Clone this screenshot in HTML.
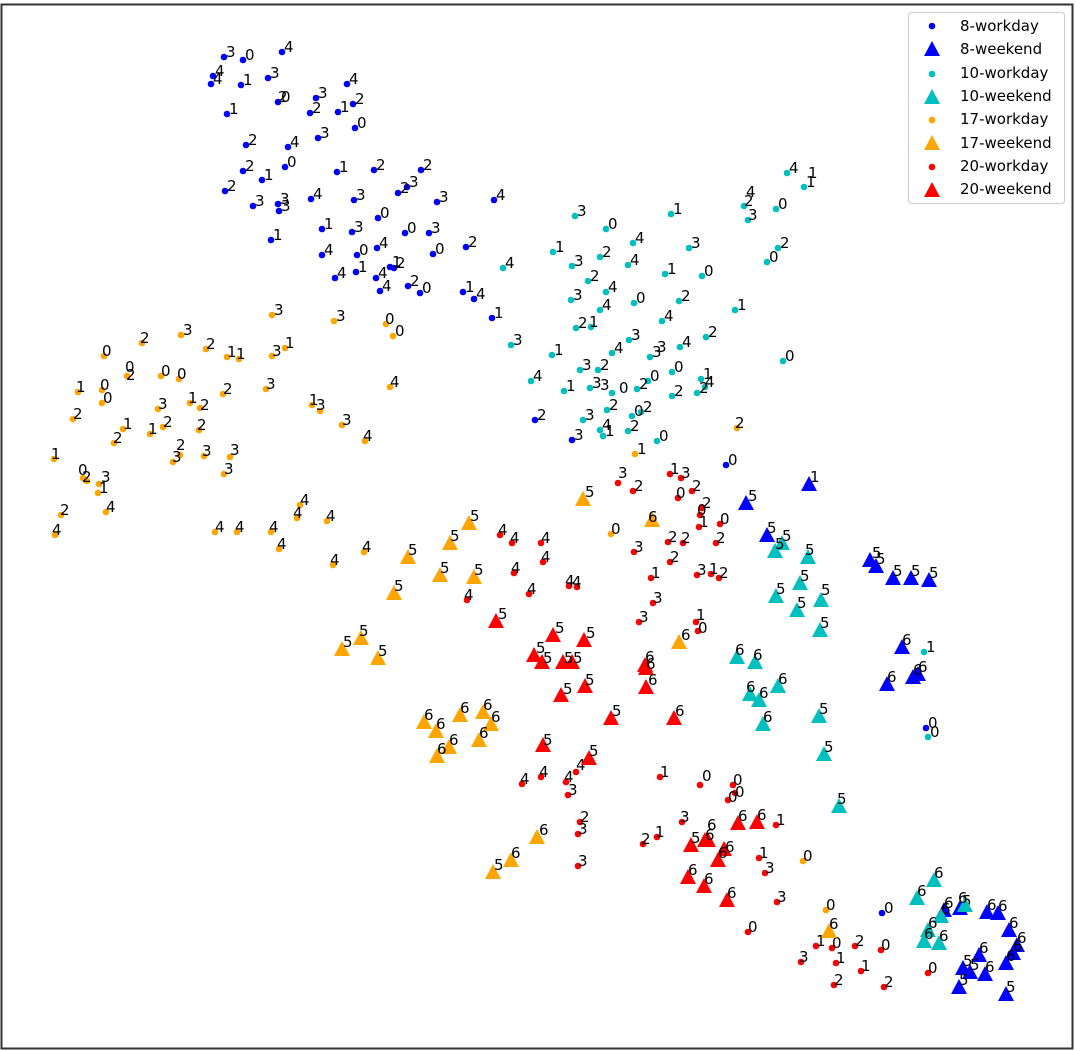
<!DOCTYPE html>
<html><head><meta charset="utf-8"><style>
html,body{margin:0;padding:0;background:#fff;width:1076px;height:1050px;overflow:hidden}
svg{display:block}
text{font-family:"DejaVu Sans","Liberation Sans",sans-serif;font-size:15px;fill:#000}
</style></head><body>
<svg width="1076" height="1050" viewBox="0 0 1076 1050" xmlns="http://www.w3.org/2000/svg">
<defs>
<circle id="d" cx="0" cy="0" r="3.3"/>
<path id="t" d="M0,-8 L8,7 L-8,7 Z"/>
</defs>
<rect x="1.5" y="4.5" width="1071" height="1044" fill="#fff" stroke="#333" stroke-width="2"/>

<!-- 8-workday -->
<g fill="#0000ff">
<use href="#d" x="224" y="57"/><use href="#d" x="243" y="60"/><use href="#d" x="282" y="52"/><use href="#d" x="213" y="76"/><use href="#d" x="211" y="84"/><use href="#d" x="241" y="85"/><use href="#d" x="268" y="78"/><use href="#d" x="278" y="102"/><use href="#d" x="316" y="98"/><use href="#d" x="347" y="84"/><use href="#d" x="227" y="114"/><use href="#d" x="310" y="113"/><use href="#d" x="338" y="112"/><use href="#d" x="353" y="104"/><use href="#d" x="355" y="128"/><use href="#d" x="246" y="145"/><use href="#d" x="288" y="147"/><use href="#d" x="318" y="138"/><use href="#d" x="243" y="171"/><use href="#d" x="262" y="180"/><use href="#d" x="285" y="167"/><use href="#d" x="337" y="172"/><use href="#d" x="374" y="170"/><use href="#d" x="421" y="170"/><use href="#d" x="225" y="191"/><use href="#d" x="253" y="206"/><use href="#d" x="278" y="204"/><use href="#d" x="279" y="211"/><use href="#d" x="311" y="199"/><use href="#d" x="354" y="200"/><use href="#d" x="398" y="193"/><use href="#d" x="407" y="187"/><use href="#d" x="437" y="202"/><use href="#d" x="494" y="200"/><use href="#d" x="271" y="240"/><use href="#d" x="322" y="229"/><use href="#d" x="352" y="232"/><use href="#d" x="378" y="218"/><use href="#d" x="405" y="233"/><use href="#d" x="429" y="233"/><use href="#d" x="322" y="255"/><use href="#d" x="357" y="255"/><use href="#d" x="377" y="248"/><use href="#d" x="433" y="254"/><use href="#d" x="466" y="247"/><use href="#d" x="335" y="278"/><use href="#d" x="356" y="272"/><use href="#d" x="376" y="278"/><use href="#d" x="390" y="267"/><use href="#d" x="394" y="268"/><use href="#d" x="380" y="291"/><use href="#d" x="408" y="286"/><use href="#d" x="420" y="293"/><use href="#d" x="463" y="292"/><use href="#d" x="474" y="299"/><use href="#d" x="492" y="318"/><use href="#d" x="535" y="420"/><use href="#d" x="572" y="440"/><use href="#d" x="726" y="465"/><use href="#d" x="926" y="728"/><use href="#d" x="882" y="913"/>
</g>
<g>
<text x="226" y="57">3</text><text x="245" y="60">0</text><text x="284" y="52">4</text><text x="215" y="76">4</text><text x="213" y="84">4</text><text x="243" y="85">1</text><text x="270" y="78">3</text><text x="278" y="102">2</text><text x="281" y="102">0</text><text x="318" y="98">3</text><text x="349" y="84">4</text><text x="229" y="114">1</text><text x="312" y="113">2</text><text x="340" y="112">1</text><text x="355" y="104">2</text><text x="357" y="128">0</text><text x="248" y="145">2</text><text x="290" y="147">4</text><text x="320" y="138">3</text><text x="245" y="171">2</text><text x="264" y="180">1</text><text x="287" y="167">0</text><text x="339" y="172">1</text><text x="376" y="170">2</text><text x="423" y="170">2</text><text x="227" y="191">2</text><text x="255" y="206">3</text><text x="280" y="204">3</text><text x="281" y="211">3</text><text x="313" y="199">4</text><text x="356" y="200">3</text><text x="400" y="193">2</text><text x="409" y="187">3</text><text x="439" y="202">3</text><text x="496" y="200">4</text><text x="273" y="240">1</text><text x="324" y="229">1</text><text x="354" y="232">3</text><text x="380" y="218">0</text><text x="407" y="233">0</text><text x="431" y="233">3</text><text x="324" y="255">4</text><text x="359" y="255">0</text><text x="379" y="248">4</text><text x="435" y="254">0</text><text x="468" y="247">2</text><text x="337" y="278">4</text><text x="358" y="272">1</text><text x="378" y="278">4</text><text x="392" y="267">1</text><text x="396" y="268">2</text><text x="382" y="291">4</text><text x="410" y="286">2</text><text x="422" y="293">0</text><text x="465" y="292">1</text><text x="476" y="299">4</text><text x="494" y="318">1</text><text x="537" y="420">2</text><text x="574" y="440">3</text><text x="728" y="465">0</text><text x="928" y="728">0</text><text x="884" y="913">0</text>
</g>

<!-- 10-workday -->
<g fill="#00bfbf">
<use href="#d" x="575" y="216"/><use href="#d" x="606" y="229"/><use href="#d" x="671" y="214"/><use href="#d" x="744" y="206"/><use href="#d" x="748" y="220"/><use href="#d" x="776" y="209"/><use href="#d" x="787" y="173"/><use href="#d" x="804" y="187"/><use href="#d" x="553" y="252"/><use href="#d" x="572" y="266"/><use href="#d" x="600" y="257"/><use href="#d" x="633" y="243"/><use href="#d" x="689" y="248"/><use href="#d" x="767" y="262"/><use href="#d" x="778" y="248"/><use href="#d" x="503" y="268"/><use href="#d" x="588" y="281"/><use href="#d" x="628" y="265"/><use href="#d" x="606" y="292"/><use href="#d" x="571" y="300"/><use href="#d" x="600" y="310"/><use href="#d" x="634" y="303"/><use href="#d" x="665" y="274"/><use href="#d" x="702" y="276"/><use href="#d" x="679" y="301"/><use href="#d" x="735" y="310"/><use href="#d" x="662" y="321"/><use href="#d" x="576" y="328"/><use href="#d" x="591" y="327"/><use href="#d" x="629" y="340"/><use href="#d" x="706" y="337"/><use href="#d" x="680" y="347"/><use href="#d" x="650" y="357"/><use href="#d" x="552" y="355"/><use href="#d" x="511" y="345"/><use href="#d" x="783" y="361"/><use href="#d" x="580" y="370"/><use href="#d" x="598" y="370"/><use href="#d" x="612" y="353"/><use href="#d" x="531" y="381"/><use href="#d" x="564" y="391"/><use href="#d" x="590" y="388"/><use href="#d" x="612" y="393"/><use href="#d" x="637" y="389"/><use href="#d" x="648" y="381"/><use href="#d" x="672" y="372"/><use href="#d" x="701" y="379"/><use href="#d" x="705" y="387"/><use href="#d" x="672" y="396"/><use href="#d" x="697" y="393"/><use href="#d" x="583" y="420"/><use href="#d" x="607" y="410"/><use href="#d" x="632" y="416"/><use href="#d" x="641" y="412"/><use href="#d" x="600" y="430"/><use href="#d" x="603" y="436"/><use href="#d" x="628" y="431"/><use href="#d" x="657" y="441"/><use href="#d" x="924" y="652"/><use href="#d" x="928" y="737"/>
</g>
<g>
<text x="577" y="216">3</text><text x="608" y="229">0</text><text x="673" y="214">1</text><text x="746" y="197">4</text><text x="744" y="206">2</text><text x="748" y="220">3</text><text x="778" y="209">0</text><text x="789" y="173">4</text><text x="806" y="187">1</text><text x="808" y="178">1</text><text x="555" y="252">1</text><text x="574" y="266">3</text><text x="602" y="257">2</text><text x="635" y="243">4</text><text x="691" y="248">3</text><text x="769" y="262">0</text><text x="780" y="248">2</text><text x="505" y="268">4</text><text x="590" y="281">2</text><text x="630" y="265">4</text><text x="608" y="292">4</text><text x="573" y="300">3</text><text x="602" y="310">4</text><text x="636" y="303">0</text><text x="667" y="274">1</text><text x="704" y="276">0</text><text x="681" y="301">2</text><text x="737" y="310">1</text><text x="664" y="321">4</text><text x="578" y="328">2</text><text x="589" y="327">1</text><text x="631" y="340">3</text><text x="708" y="337">2</text><text x="682" y="347">4</text><text x="652" y="357">3</text><text x="657" y="352">3</text><text x="554" y="355">1</text><text x="513" y="345">3</text><text x="785" y="361">0</text><text x="582" y="370">3</text><text x="600" y="370">2</text><text x="614" y="353">4</text><text x="533" y="381">4</text><text x="566" y="391">1</text><text x="592" y="388">3</text><text x="600" y="390">3</text><text x="619" y="393">0</text><text x="639" y="389">2</text><text x="650" y="381">0</text><text x="674" y="372">0</text><text x="703" y="379">1</text><text x="705" y="387">4</text><text x="674" y="396">2</text><text x="699" y="393">2</text><text x="585" y="420">3</text><text x="609" y="410">2</text><text x="634" y="416">0</text><text x="643" y="412">2</text><text x="602" y="430">4</text><text x="605" y="436">1</text><text x="630" y="431">2</text><text x="659" y="441">0</text><text x="926" y="652">1</text><text x="930" y="737">0</text>
</g>

<!-- 17-workday -->
<g fill="#ffa500">
<use href="#d" x="272" y="315"/><use href="#d" x="334" y="321"/><use href="#d" x="386" y="324"/><use href="#d" x="393" y="336"/><use href="#d" x="104" y="356"/><use href="#d" x="142" y="343"/><use href="#d" x="181" y="335"/><use href="#d" x="206" y="349"/><use href="#d" x="227" y="357"/><use href="#d" x="239" y="359"/><use href="#d" x="272" y="356"/><use href="#d" x="285" y="348"/><use href="#d" x="127" y="376"/><use href="#d" x="161" y="376"/><use href="#d" x="179" y="379"/><use href="#d" x="78" y="392"/><use href="#d" x="102" y="390"/><use href="#d" x="102" y="403"/><use href="#d" x="73" y="419"/><use href="#d" x="390" y="387"/><use href="#d" x="223" y="394"/><use href="#d" x="266" y="389"/><use href="#d" x="158" y="409"/><use href="#d" x="190" y="403"/><use href="#d" x="200" y="408"/><use href="#d" x="312" y="405"/><use href="#d" x="320" y="411"/><use href="#d" x="342" y="425"/><use href="#d" x="123" y="429"/><use href="#d" x="163" y="427"/><use href="#d" x="199" y="430"/><use href="#d" x="114" y="443"/><use href="#d" x="150" y="434"/><use href="#d" x="365" y="441"/><use href="#d" x="54" y="459"/><use href="#d" x="180" y="455"/><use href="#d" x="173" y="462"/><use href="#d" x="204" y="456"/><use href="#d" x="230" y="457"/><use href="#d" x="224" y="474"/><use href="#d" x="83" y="478"/><use href="#d" x="87" y="481"/><use href="#d" x="99" y="484"/><use href="#d" x="98" y="493"/><use href="#d" x="61" y="515"/><use href="#d" x="106" y="512"/><use href="#d" x="55" y="535"/><use href="#d" x="300" y="505"/><use href="#d" x="297" y="518"/><use href="#d" x="327" y="521"/><use href="#d" x="215" y="532"/><use href="#d" x="237" y="532"/><use href="#d" x="271" y="532"/><use href="#d" x="279" y="549"/><use href="#d" x="333" y="565"/><use href="#d" x="364" y="552"/><use href="#d" x="737" y="428"/><use href="#d" x="635" y="454"/><use href="#d" x="611" y="534"/><use href="#d" x="803" y="861"/><use href="#d" x="826" y="910"/>
</g>
<g>
<text x="274" y="315">3</text><text x="336" y="321">3</text><text x="385" y="324">0</text><text x="395" y="336">0</text><text x="102" y="356">0</text><text x="140" y="343">2</text><text x="183" y="335">3</text><text x="206" y="349">2</text><text x="227" y="357">1</text><text x="236" y="359">1</text><text x="272" y="356">3</text><text x="285" y="348">1</text><text x="125" y="372">0</text><text x="126" y="380">2</text><text x="161" y="376">0</text><text x="177" y="379">0</text><text x="76" y="392">1</text><text x="100" y="390">0</text><text x="103" y="403">0</text><text x="73" y="419">2</text><text x="390" y="387">4</text><text x="223" y="394">2</text><text x="266" y="389">3</text><text x="158" y="409">3</text><text x="188" y="403">1</text><text x="200" y="410">2</text><text x="309" y="405">1</text><text x="316" y="410">3</text><text x="342" y="425">3</text><text x="123" y="429">1</text><text x="163" y="427">2</text><text x="197" y="430">2</text><text x="113" y="443">2</text><text x="148" y="434">1</text><text x="363" y="441">4</text><text x="51" y="459">1</text><text x="176" y="450">2</text><text x="172" y="462">3</text><text x="202" y="456">3</text><text x="230" y="455">3</text><text x="224" y="474">3</text><text x="78" y="475">0</text><text x="82" y="482">2</text><text x="101" y="482">3</text><text x="99" y="493">1</text><text x="60" y="515">2</text><text x="106" y="512">4</text><text x="52" y="535">4</text><text x="300" y="505">4</text><text x="293" y="518">4</text><text x="326" y="521">4</text><text x="215" y="532">4</text><text x="235" y="532">4</text><text x="269" y="532">4</text><text x="277" y="549">4</text><text x="330" y="565">4</text><text x="362" y="552">4</text><text x="735" y="428">2</text><text x="637" y="454">1</text><text x="611" y="534">0</text><text x="803" y="861">0</text><text x="826" y="910">0</text>
</g>

<!-- 20-workday -->
<g fill="#ff0000">
<use href="#d" x="618" y="483"/><use href="#d" x="633" y="491"/><use href="#d" x="670" y="474"/><use href="#d" x="681" y="478"/><use href="#d" x="692" y="491"/><use href="#d" x="702" y="508"/><use href="#d" x="700" y="515"/><use href="#d" x="678" y="498"/><use href="#d" x="720" y="524"/><use href="#d" x="699" y="527"/><use href="#d" x="668" y="542"/><use href="#d" x="683" y="543"/><use href="#d" x="716" y="543"/><use href="#d" x="500" y="535"/><use href="#d" x="512" y="543"/><use href="#d" x="541" y="543"/><use href="#d" x="634" y="552"/><use href="#d" x="670" y="562"/><use href="#d" x="543" y="562"/><use href="#d" x="514" y="573"/><use href="#d" x="651" y="578"/><use href="#d" x="697" y="575"/><use href="#d" x="711" y="574"/><use href="#d" x="719" y="578"/><use href="#d" x="569" y="586"/><use href="#d" x="577" y="587"/><use href="#d" x="529" y="594"/><use href="#d" x="467" y="600"/><use href="#d" x="653" y="603"/><use href="#d" x="639" y="622"/><use href="#d" x="696" y="622"/><use href="#d" x="698" y="631"/><use href="#d" x="660" y="777"/><use href="#d" x="700" y="785"/><use href="#d" x="733" y="785"/><use href="#d" x="735" y="793"/><use href="#d" x="728" y="800"/><use href="#d" x="541" y="777"/><use href="#d" x="522" y="784"/><use href="#d" x="566" y="782"/><use href="#d" x="576" y="772"/><use href="#d" x="568" y="795"/><use href="#d" x="580" y="822"/><use href="#d" x="578" y="834"/><use href="#d" x="682" y="822"/><use href="#d" x="776" y="825"/><use href="#d" x="657" y="837"/><use href="#d" x="643" y="844"/><use href="#d" x="578" y="866"/><use href="#d" x="759" y="858"/><use href="#d" x="765" y="873"/><use href="#d" x="777" y="902"/><use href="#d" x="748" y="932"/><use href="#d" x="816" y="946"/><use href="#d" x="832" y="948"/><use href="#d" x="855" y="946"/><use href="#d" x="881" y="950"/><use href="#d" x="801" y="962"/><use href="#d" x="836" y="963"/><use href="#d" x="861" y="971"/><use href="#d" x="834" y="985"/><use href="#d" x="884" y="987"/><use href="#d" x="928" y="973"/>
</g>
<g>
<text x="618" y="478">3</text><text x="634" y="491">2</text><text x="670" y="474">1</text><text x="681" y="478">3</text><text x="692" y="491">2</text><text x="702" y="508">2</text><text x="697" y="515">0</text><text x="676" y="498">0</text><text x="720" y="524">0</text><text x="699" y="527">1</text><text x="668" y="542">2</text><text x="681" y="543">2</text><text x="716" y="543">2</text><text x="498" y="535">4</text><text x="510" y="543">4</text><text x="541" y="543">4</text><text x="634" y="552">3</text><text x="670" y="562">2</text><text x="541" y="562">4</text><text x="511" y="573">4</text><text x="651" y="578">1</text><text x="697" y="575">3</text><text x="709" y="574">1</text><text x="719" y="578">2</text><text x="565" y="586">4</text><text x="572" y="587">4</text><text x="527" y="594">4</text><text x="464" y="600">4</text><text x="653" y="603">3</text><text x="639" y="622">3</text><text x="696" y="620">1</text><text x="698" y="633">0</text><text x="660" y="777">1</text><text x="702" y="781">0</text><text x="733" y="785">0</text><text x="735" y="797">0</text><text x="728" y="802">0</text><text x="539" y="777">4</text><text x="520" y="784">4</text><text x="564" y="782">4</text><text x="576" y="770">4</text><text x="568" y="795">3</text><text x="580" y="822">2</text><text x="578" y="834">3</text><text x="680" y="822">3</text><text x="776" y="825">1</text><text x="655" y="837">1</text><text x="641" y="844">2</text><text x="578" y="866">3</text><text x="759" y="858">1</text><text x="765" y="873">3</text><text x="777" y="902">3</text><text x="748" y="932">0</text><text x="816" y="946">1</text><text x="832" y="948">0</text><text x="855" y="946">2</text><text x="881" y="950">0</text><text x="799" y="962">3</text><text x="836" y="963">1</text><text x="861" y="971">1</text><text x="834" y="985">2</text><text x="884" y="987">2</text><text x="928" y="973">0</text>
</g>

<!-- 17-weekend -->
<g fill="#ffa500">
<use href="#t" x="583" y="499"/><use href="#t" x="652" y="520"/><use href="#t" x="469" y="523"/><use href="#t" x="450" y="543"/><use href="#t" x="408" y="557"/><use href="#t" x="440" y="575"/><use href="#t" x="474" y="577"/><use href="#t" x="394" y="593"/><use href="#t" x="342" y="649"/><use href="#t" x="361" y="638"/><use href="#t" x="378" y="658"/><use href="#t" x="679" y="642"/><use href="#t" x="424" y="722"/><use href="#t" x="436" y="731"/><use href="#t" x="460" y="715"/><use href="#t" x="483" y="712"/><use href="#t" x="491" y="724"/><use href="#t" x="449" y="747"/><use href="#t" x="479" y="740"/><use href="#t" x="437" y="756"/><use href="#t" x="537" y="837"/><use href="#t" x="511" y="860"/><use href="#t" x="493" y="872"/><use href="#t" x="829" y="931"/>
</g>
<g>
<text x="585" y="497">5</text><text x="648" y="522">6</text><text x="470" y="521">5</text><text x="450" y="541">5</text><text x="408" y="555">5</text><text x="440" y="573">5</text><text x="474" y="575">5</text><text x="394" y="591">5</text><text x="343" y="647">5</text><text x="359" y="636">5</text><text x="378" y="656">5</text><text x="681" y="640">6</text><text x="424" y="720">6</text><text x="436" y="729">6</text><text x="460" y="713">6</text><text x="483" y="710">6</text><text x="491" y="722">6</text><text x="449" y="745">6</text><text x="479" y="738">6</text><text x="437" y="754">6</text><text x="539" y="835">6</text><text x="511" y="858">6</text><text x="494" y="870">5</text><text x="829" y="929">6</text>
</g>

<!-- 20-weekend -->
<g fill="#ff0000">
<use href="#t" x="496" y="621"/><use href="#t" x="553" y="635"/><use href="#t" x="584" y="640"/><use href="#t" x="534" y="655"/><use href="#t" x="542" y="662"/><use href="#t" x="563" y="662"/><use href="#t" x="572" y="662"/><use href="#t" x="645" y="665"/><use href="#t" x="646" y="668"/><use href="#t" x="646" y="687"/><use href="#t" x="585" y="686"/><use href="#t" x="561" y="695"/><use href="#t" x="611" y="718"/><use href="#t" x="674" y="718"/><use href="#t" x="543" y="745"/><use href="#t" x="589" y="758"/><use href="#t" x="738" y="823"/><use href="#t" x="757" y="822"/><use href="#t" x="708" y="840"/><use href="#t" x="705" y="840"/><use href="#t" x="691" y="845"/><use href="#t" x="724" y="849"/><use href="#t" x="718" y="860"/><use href="#t" x="688" y="877"/><use href="#t" x="704" y="886"/><use href="#t" x="727" y="900"/>
</g>
<g>
<text x="498" y="619">5</text><text x="555" y="633">5</text><text x="586" y="638">5</text><text x="536" y="653">5</text><text x="543" y="663">5</text><text x="564" y="663">5</text><text x="573" y="663">5</text><text x="645" y="662">6</text><text x="646" y="669">6</text><text x="648" y="685">6</text><text x="585" y="685">5</text><text x="563" y="694">5</text><text x="612" y="716">5</text><text x="675" y="716">6</text><text x="543" y="745">5</text><text x="589" y="756">5</text><text x="738" y="821">6</text><text x="757" y="820">6</text><text x="707" y="830">6</text><text x="705" y="840">6</text><text x="691" y="843">5</text><text x="725" y="852">6</text><text x="718" y="858">6</text><text x="688" y="875">6</text><text x="704" y="884">6</text><text x="727" y="898">6</text>
</g>

<!-- 8-weekend -->
<g fill="#0000ff">
<use href="#t" x="746" y="503"/><use href="#t" x="767" y="535"/><use href="#t" x="809" y="484"/><use href="#t" x="870" y="560"/><use href="#t" x="876" y="566"/><use href="#t" x="893" y="578"/><use href="#t" x="911" y="578"/><use href="#t" x="929" y="580"/><use href="#t" x="902" y="647"/><use href="#t" x="913" y="677"/><use href="#t" x="918" y="674"/><use href="#t" x="887" y="684"/><use href="#t" x="944" y="910"/><use href="#t" x="960" y="908"/><use href="#t" x="987" y="912"/><use href="#t" x="998" y="913"/><use href="#t" x="1009" y="930"/><use href="#t" x="1017" y="945"/><use href="#t" x="1013" y="953"/><use href="#t" x="979" y="955"/><use href="#t" x="1006" y="963"/><use href="#t" x="963" y="968"/><use href="#t" x="970" y="972"/><use href="#t" x="985" y="974"/><use href="#t" x="959" y="987"/><use href="#t" x="1006" y="994"/>
</g>
<g>
<text x="748" y="501">5</text><text x="767" y="533">5</text><text x="810" y="482">1</text><text x="872" y="558">5</text><text x="876" y="564">5</text><text x="893" y="576">5</text><text x="911" y="576">5</text><text x="929" y="578">5</text><text x="902" y="645">6</text><text x="913" y="675">6</text><text x="918" y="672">6</text><text x="887" y="682">6</text><text x="944" y="908">6</text><text x="962" y="906">5</text><text x="987" y="910">6</text><text x="998" y="911">6</text><text x="1009" y="928">6</text><text x="1017" y="943">6</text><text x="1013" y="951">6</text><text x="979" y="953">6</text><text x="1006" y="961">6</text><text x="963" y="966">5</text><text x="970" y="970">5</text><text x="985" y="972">6</text><text x="959" y="985">5</text><text x="1006" y="992">5</text>
</g>

<!-- 10-weekend -->
<g fill="#00bfbf">
<use href="#t" x="782" y="543"/><use href="#t" x="775" y="551"/><use href="#t" x="808" y="557"/><use href="#t" x="800" y="583"/><use href="#t" x="776" y="596"/><use href="#t" x="821" y="600"/><use href="#t" x="797" y="610"/><use href="#t" x="820" y="630"/><use href="#t" x="737" y="657"/><use href="#t" x="755" y="662"/><use href="#t" x="778" y="686"/><use href="#t" x="750" y="694"/><use href="#t" x="759" y="700"/><use href="#t" x="763" y="724"/><use href="#t" x="819" y="716"/><use href="#t" x="824" y="754"/><use href="#t" x="839" y="806"/><use href="#t" x="934" y="880"/><use href="#t" x="917" y="898"/><use href="#t" x="941" y="916"/><use href="#t" x="965" y="905"/><use href="#t" x="924" y="941"/><use href="#t" x="939" y="943"/><use href="#t" x="928" y="930"/>
</g>
<g>
<text x="782" y="541">5</text><text x="775" y="549">5</text><text x="805" y="555">5</text><text x="800" y="581">5</text><text x="776" y="594">5</text><text x="821" y="595">5</text><text x="797" y="608">5</text><text x="820" y="628">5</text><text x="735" y="655">6</text><text x="753" y="660">6</text><text x="778" y="684">6</text><text x="746" y="692">6</text><text x="759" y="698">6</text><text x="763" y="722">6</text><text x="819" y="714">5</text><text x="824" y="752">5</text><text x="837" y="804">5</text><text x="934" y="878">6</text><text x="917" y="896">6</text><text x="941" y="914">6</text><text x="958" y="903">6</text><text x="924" y="939">6</text><text x="939" y="941">6</text><text x="928" y="928">6</text>
</g>

<!-- legend -->
<rect x="908.5" y="12.5" width="156" height="191" rx="3" fill="#fff" fill-opacity="0.85" stroke="#ccc" stroke-width="1"/>
<g fill="#0000ff"><use href="#d" x="932" y="26"/><use href="#t" x="932" y="49"/></g>
<g fill="#00bfbf"><use href="#d" x="932" y="74"/><use href="#t" x="932" y="97"/></g>
<g fill="#ffa500"><use href="#d" x="932" y="120"/><use href="#t" x="932" y="143"/></g>
<g fill="#ff0000"><use href="#d" x="932" y="167"/><use href="#t" x="932" y="190"/></g>
<g style="font-size:15px">
<text x="960" y="31">8-workday</text>
<text x="960" y="54">8-weekend</text>
<text x="960" y="78">10-workday</text>
<text x="960" y="101">10-weekend</text>
<text x="960" y="124">17-workday</text>
<text x="960" y="148">17-weekend</text>
<text x="960" y="171">20-workday</text>
<text x="960" y="194">20-weekend</text>
</g>
</svg>
</body></html>
